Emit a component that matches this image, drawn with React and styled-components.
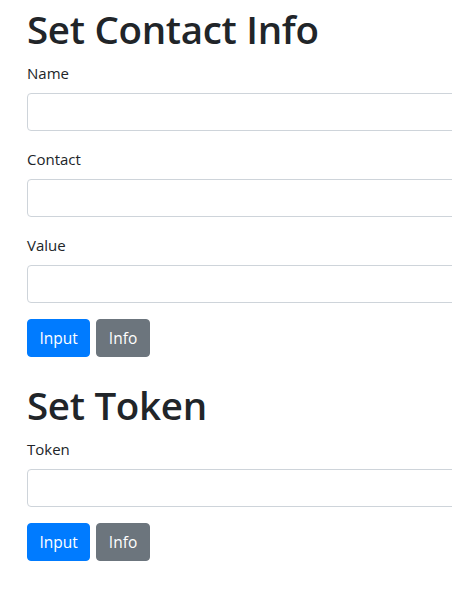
import React from "react";
import styled, { createGlobalStyle } from "styled-components";

const GlobalStyle = createGlobalStyle`
  body {
    margin: 0;
    overflow: hidden;
    background: #fff;
    color: #212529;
    font-family: "Open Sans", "Noto Sans", sans-serif;
    font-size: 16px;
    line-height: 1.5;
  }
  * { box-sizing: border-box; }
`;

const Page = styled.div`
  width: 640px;
  padding: 5px 0 0 27px;
`;

const Section = styled.section`
  margin-bottom: 24px;
`;

const Title = styled.h1`
  margin: 0 0 8px;
  font-size: 38.5px;
  font-weight: 600;
  line-height: 48px;
  letter-spacing: -0.3px;
`;

const FormGroup = styled.div`
  margin-bottom: 16px;
`;

const Label = styled.label`
  display: block;
  margin-bottom: 8px;
  font-size: 15px;
  line-height: 24px;
`;

const Input = styled.input`
  display: block;
  width: 100%;
  height: 38px;
  padding: 6px 12px;
  border: 1px solid #ced4da;
  border-radius: 4px;
  font: inherit;
  color: #495057;
  background: #fff;
`;

const Buttons = styled.div`
  display: flex;
  gap: 6px;
`;

const Button = styled.button`
  height: 38px;
  padding: 0 11.5px;
  border: 1px solid ${(p) => (p.$variant === "secondary" ? "#6c757d" : "#007bff")};
  border-radius: 4px;
  background: ${(p) => (p.$variant === "secondary" ? "#6c757d" : "#007bff")};
  color: #fff;
  font-family: inherit;
  font-size: 15.5px;
  line-height: 24px;
  cursor: pointer;
`;

const Field = ({ label }) => (
  <FormGroup>
    <Label>{label}</Label>
    <Input type="text" />
  </FormGroup>
);

const App = () => {
  return (
    <>
      <GlobalStyle />
      <Page>
        <Section>
          <Title>Set Contact Info</Title>
          <Field label="Name" />
          <Field label="Contact" />
          <Field label="Value" />
          <Buttons>
            <Button>Input</Button>
            <Button $variant="secondary">Info</Button>
          </Buttons>
        </Section>
        <Section>
          <Title>Set Token</Title>
          <Field label="Token" />
          <Buttons>
            <Button>Input</Button>
            <Button $variant="secondary">Info</Button>
          </Buttons>
        </Section>
      </Page>
    </>
  );
};

export default App;
